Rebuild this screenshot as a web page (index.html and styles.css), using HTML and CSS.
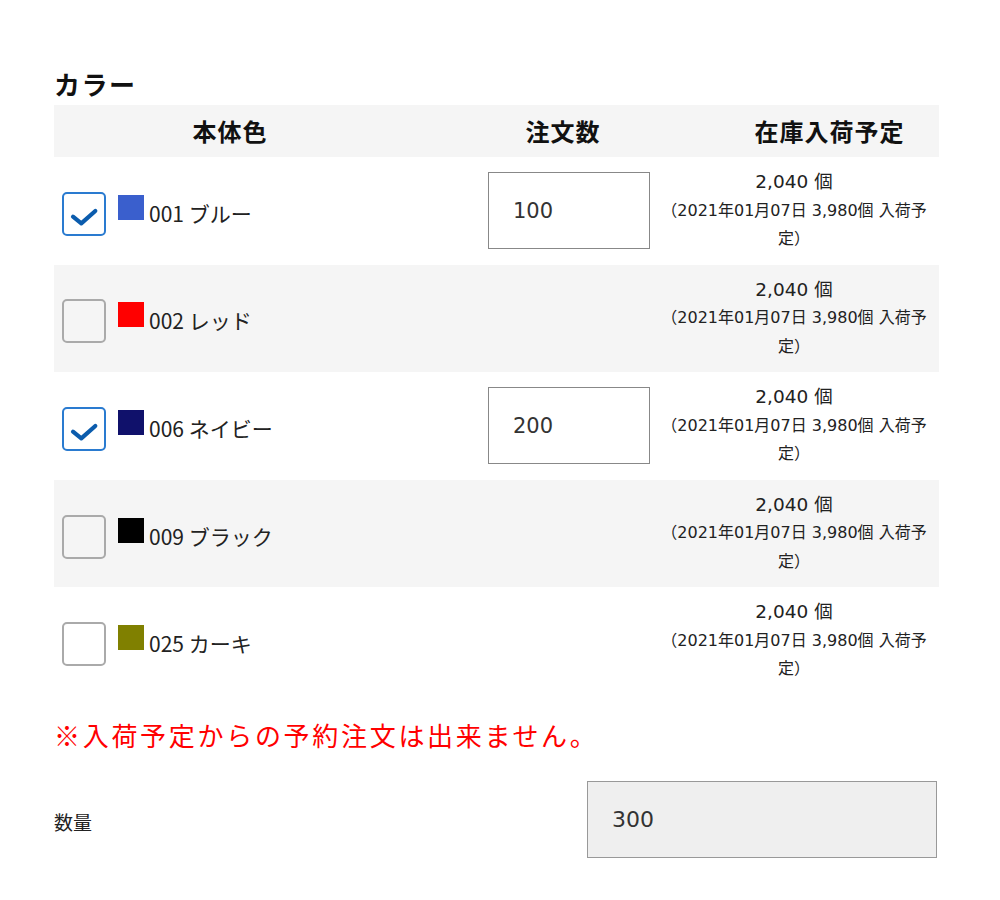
FILE: index.html
```html
<!DOCTYPE html>
<html lang="ja">
<head>
<meta charset="utf-8">
<title>カラー</title>
<link rel="stylesheet" href="styles.css">
</head>
<body>
<div class="page">
  <h2 class="title">カラー</h2>
  <div class="table">
    <div class="thead">
      <div class="th">本体色</div>
      <div class="th">注文数</div>
      <div class="th">在庫入荷予定</div>
    </div>

    <div class="row">
      <div class="color-cell">
        <span class="check checked"><svg viewBox="0 0 44 44" width="44" height="44"><path d="M11 24.7 L19.3 31.3 L33.3 19" fill="none" stroke="#0b5cad" stroke-width="4.2" stroke-linecap="round" stroke-linejoin="round"/></svg></span>
        <span class="swatch" style="background:#3a5fcd"></span>
        <span class="label">001 ブルー</span>
      </div>
      <div class="qty-cell"><input class="qty" type="text" value="100"></div>
      <div class="stock"><div class="count">2,040 個</div><div class="sub">（2021年01月07日 3,980個 入荷予<br>定）</div></div>
    </div>

    <div class="row alt">
      <div class="color-cell">
        <span class="check"></span>
        <span class="swatch" style="background:#ff0000"></span>
        <span class="label">002 レッド</span>
      </div>
      <div class="qty-cell"></div>
      <div class="stock"><div class="count">2,040 個</div><div class="sub">（2021年01月07日 3,980個 入荷予<br>定）</div></div>
    </div>

    <div class="row">
      <div class="color-cell">
        <span class="check checked"><svg viewBox="0 0 44 44" width="44" height="44"><path d="M11 24.7 L19.3 31.3 L33.3 19" fill="none" stroke="#0b5cad" stroke-width="4.2" stroke-linecap="round" stroke-linejoin="round"/></svg></span>
        <span class="swatch" style="background:#10116b"></span>
        <span class="label">006 ネイビー</span>
      </div>
      <div class="qty-cell"><input class="qty" type="text" value="200"></div>
      <div class="stock"><div class="count">2,040 個</div><div class="sub">（2021年01月07日 3,980個 入荷予<br>定）</div></div>
    </div>

    <div class="row alt">
      <div class="color-cell">
        <span class="check"></span>
        <span class="swatch" style="background:#000000"></span>
        <span class="label">009 ブラック</span>
      </div>
      <div class="qty-cell"></div>
      <div class="stock"><div class="count">2,040 個</div><div class="sub">（2021年01月07日 3,980個 入荷予<br>定）</div></div>
    </div>

    <div class="row">
      <div class="color-cell">
        <span class="check"></span>
        <span class="swatch" style="background:#808000"></span>
        <span class="label">025 カーキ</span>
      </div>
      <div class="qty-cell"></div>
      <div class="stock"><div class="count">2,040 個</div><div class="sub">（2021年01月07日 3,980個 入荷予<br>定）</div></div>
    </div>
  </div>

  <p class="note">※入荷予定からの予約注文は出来ません。</p>

  <div class="total">
    <span class="total-label">数量</span>
    <input class="total-input" type="text" value="300" readonly>
  </div>
</div>
</body>
</html>
```

FILE: styles.css
```css
* { box-sizing: border-box; }
html, body { margin: 0; padding: 0; background: #fff; }
body {
  font-family: "Noto Sans CJK JP", "Noto Sans", sans-serif;
  color: #222;
}
.page {
  width: 939px;
  padding: 65px 0 0 54px;
}
.title {
  margin: 0 0 3px 0;
  font-size: 26px;
  line-height: 37px;
  font-weight: 700;
  letter-spacing: 1.5px;
  color: #111;
}
.thead {
  display: grid;
  grid-template-columns: 352px 314px 219px;
  height: 52px;
  background: #f5f5f5;
  align-items: center;
}
.th {
  text-align: center;
  font-size: 24px;
  font-weight: 700;
  letter-spacing: 1px;
  color: #111;
  line-height: 30px;
}
.row {
  display: grid;
  grid-template-columns: 1fr 162px 284px;
  column-gap: 5px;
  height: 107.6px;
  align-items: center;
}
.row.alt { background: #f5f5f5; }
.color-cell {
  display: flex;
  align-items: center;
  padding-left: 8px;
}
.check {
  width: 44px;
  height: 44px;
  border: 2px solid #aaa;
  border-radius: 5px;
  margin-top: 6px;
  flex: none;
  position: relative;
}
.check svg { position: absolute; left: -2px; top: -2px; }
.check.checked {
  border-color: #2a7bd0;
  background: #fff;
}
.swatch {
  width: 26px;
  height: 25px;
  margin-left: 12px;
  margin-bottom: 7px;
  flex: none;
}
.label {
  margin-left: 5px;
  font-size: 21px;
  line-height: 28px;
  margin-top: 4px;
  color: #222;
}
.qty-cell { height: 77px; }
.qty {
  width: 162px;
  height: 77px;
  border: 1px solid #888;
  padding: 0 0 0 24px;
  font-family: "DejaVu Sans", "Noto Sans CJK JP", sans-serif;
  font-size: 21px;
  color: #333;
  background: #fff;
  outline: none;
}
.stock {
  text-align: center;
  font-family: "DejaVu Sans", "Noto Sans CJK JP", sans-serif;
  color: #222;
  padding-right: 6px;
}
.count {
  font-size: 18.5px;
  line-height: 28.5px;
}
.sub {
  font-size: 16px;
  line-height: 28.5px;
  white-space: nowrap;
}
.note {
  margin: 21px 0 0 0;
  font-size: 26px;
  line-height: 37px;
  letter-spacing: 2.7px;
  color: #ff0000;
}
.total {
  display: flex;
  justify-content: space-between;
  align-items: center;
  margin-top: 28px;
  padding-right: 2px;
}
.total-label {
  font-size: 19px;
  color: #222;
  margin-top: 4px;
}
.total-input {
  width: 350px;
  height: 77px;
  border: 1px solid #999;
  background: #efefef;
  padding: 0 0 0 24px;
  font-family: "DejaVu Sans", "Noto Sans CJK JP", sans-serif;
  font-size: 22px;
  color: #333;
  outline: none;
}
```
